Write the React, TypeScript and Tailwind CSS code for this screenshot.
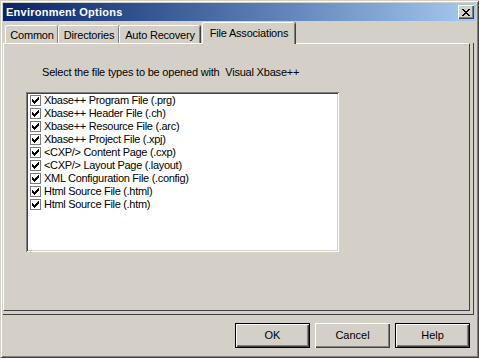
import React from "react";

const items = [
  "Xbase++ Program File (.prg)",
  "Xbase++ Header File (.ch)",
  "Xbase++ Resource File (.arc)",
  "Xbase++ Project File (.xpj)",
  "<CXP/> Content Page (.cxp)",
  "<CXP/> Layout Page (.layout)",
  "XML Configuration File (.config)",
  "Html Source File (.html)",
  "Html Source File (.htm)",
];

const checkPixels = [
  [6, 0], [5, 1], [6, 1], [0, 2], [4, 2], [5, 2], [6, 2],
  [0, 3], [1, 3], [3, 3], [4, 3], [5, 3],
  [0, 4], [1, 4], [2, 4], [3, 4], [4, 4],
  [1, 5], [2, 5], [3, 5], [2, 6],
];

function CheckBox() {
  return (
    <div className="w-[11px] h-[11px] border border-[#7a7a7a] bg-white shrink-0 flex items-center justify-center">
      <svg width="7" height="7" viewBox="0 0 7 7" shapeRendering="crispEdges">
        {checkPixels.map(([x, y]) => (
          <rect key={x + "-" + y} x={x} y={y} width="1" height="1" fill="#000" />
        ))}
      </svg>
    </div>
  );
}

function Tab({ label, width }: { label: string; width: string }) {
  return (
    <div
      className={
        "h-[18px] mt-[3px] flex items-center justify-center border-t border-l border-white rounded-tl-[2px] rounded-tr-[2px] shadow-[inset_-1px_0_#808080,1px_0_#404040] " +
        width
      }
    >
      <span className="text-[11px] leading-none text-black pt-[1px] tracking-[-0.2px]">{label}</span>
    </div>
  );
}

function Button({ text, isDefault }: { text: string; isDefault?: boolean }) {
  return (
    <button
      type="button"
      className={
        "w-[75px] h-[25px] bg-[#d4d0c8] text-[11px] text-black flex items-center justify-center " +
        (isDefault
          ? "border border-black shadow-[inset_1px_1px_#fff,inset_-1px_-1px_#404040,inset_-2px_-2px_#808080]"
          : "shadow-[inset_1px_1px_#fff,inset_-1px_-1px_#404040,inset_-2px_-2px_#808080]")
      }
    >
      {text}
    </button>
  );
}

export default function App() {
  return (
    <div
      className="w-[479px] h-[358px] bg-[#d4d0c8] p-[3px] flex flex-col shadow-[inset_1px_1px_#d4d0c8,inset_-1px_-1px_#404040,inset_2px_2px_#fff,inset_-2px_-2px_#808080]"
      style={{ fontFamily: '"Liberation Sans", Arial, sans-serif' }}
    >
      {/* title bar */}
      <div className="h-[18px] flex items-center justify-between pl-[3px] pr-[2px] bg-linear-to-r from-[#0a246a] to-[#a6caf0]">
        <span className="text-white font-bold text-[11px] leading-none tracking-[0.25px]">Environment Options</span>
        <div className="w-[16px] h-[14px] bg-[#d4d0c8] flex items-center justify-center shadow-[inset_1px_1px_#fff,inset_-1px_-1px_#404040,inset_-2px_-2px_#808080]">
          <svg width="8" height="7" viewBox="0 0 8 7" shapeRendering="crispEdges">
            <path d="M0 0h2l2 2.5L6 0h2L5 3.5 8 7H6L4 4.5 2 7H0l3-3.5z" fill="#000" />
          </svg>
        </div>
      </div>

      {/* tabs */}
      <div className="flex items-end pl-[2px] mt-[1px] h-[21px] relative z-10">
        <Tab label="Common" width="w-[53px]" />
        <Tab label="Directories" width="w-[61px]" />
        <Tab label="Auto Recovery" width="w-[81px]" />
        <div className="w-[93px] h-[22px] -mb-[1px] ml-[2px] bg-[#d4d0c8] flex items-start justify-center pt-[5px] border-t border-l border-white rounded-tl-[2px] rounded-tr-[2px] shadow-[inset_-1px_0_#808080,1px_0_#404040]">
          <span className="text-[11px] leading-none text-black tracking-[-0.2px]">File Associations</span>
        </div>
      </div>

      {/* tab panel */}
      <div className="h-[272px] mr-[2px] border-r border-b border-[#404040] pr-[3px] pb-[3px]">
        <div className="h-full border-t border-l border-white border-r border-b border-r-[#404040] border-b-[#404040] flex flex-col">
          <div className="pl-[38px] pt-[23px] text-[11px] leading-none text-black tracking-[-0.2px]">
            Select the file types to be opened with&nbsp; Visual Xbase++
          </div>
          <div className="ml-[22px] mt-[14px] w-[313px] h-[160px] bg-white shadow-[inset_1px_1px_#808080,inset_-1px_-1px_#fff,inset_2px_2px_#404040,inset_-2px_-2px_#d4d0c8] pt-[2px] pl-[4px]">
            {items.map((it) => (
              <div key={it} className="flex items-center h-[13px] gap-[3px]">
                <CheckBox />
                <span className="text-[11px] leading-none text-black whitespace-pre tracking-[-0.3px]">{it}</span>
              </div>
            ))}
          </div>
        </div>
      </div>

      {/* buttons */}
      <div className="flex justify-end gap-[5px] mt-[8px] pr-[6px]">
        <Button text="OK" isDefault />
        <Button text="Cancel" />
        <Button text="Help" isDefault />
      </div>
    </div>
  );
}
